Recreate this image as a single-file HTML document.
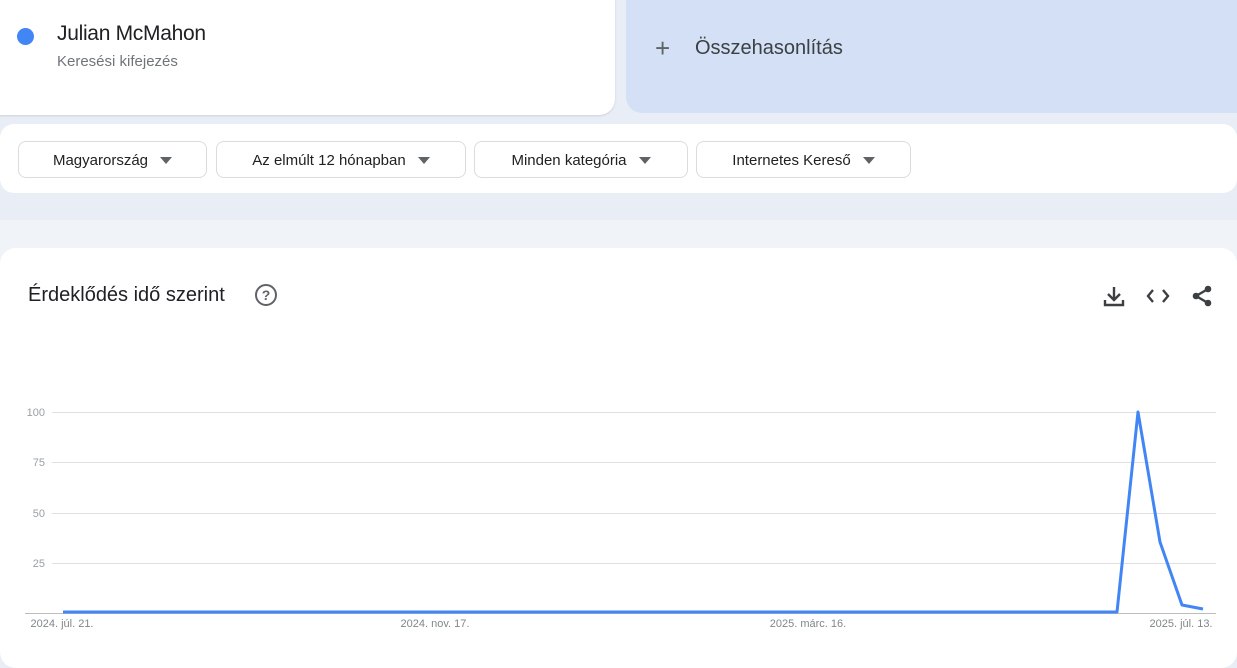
<!DOCTYPE html>
<html><head><meta charset="utf-8"><style>
body{margin:0;width:1237px;height:651px;overflow:hidden;background:#e9eef6;font-family:"Liberation Sans",sans-serif;position:relative}
.a{position:absolute}
.card1{left:-20px;top:-20px;width:635px;height:135px;background:#fff;border-radius:16px;box-shadow:0 1px 2px rgba(0,0,0,.12)}
.card2{left:626px;top:-20px;width:640px;height:133px;background:#d3e0f5;border-radius:16px}
.filt{left:0;top:124px;width:1237px;height:69px;background:#fff;border-radius:14px}
.btn{top:141px;height:37px;padding-top:2px;border:1px solid #dadce0;border-radius:8px;background:#fff;font-size:15px;color:#202124;display:flex;align-items:center;justify-content:center;gap:12px;box-sizing:border-box}
.tri{width:0;height:0;border-left:6px solid transparent;border-right:6px solid transparent;border-top:7px solid #5f6368}
.band{left:0;top:220px;width:1237px;height:431px;background:#f0f4f9}
.chart{left:0;top:248px;width:1237px;height:420px;background:#fff;border-radius:16px}
</style></head><body>
<div class="a card1"></div>
<div class="a" style="left:17px;top:28px;width:17px;height:17px;border-radius:50%;background:#4285f4"></div>
<div class="a" style="left:57px;top:22px;font-size:21px;color:#202124;letter-spacing:-0.3px">Julian McMahon</div>
<div class="a" style="left:57px;top:53px;font-size:15px;color:#70757a">Keresési kifejezés</div>
<div class="a card2"></div>
<div class="a" style="left:655px;top:34px;font-size:26px;color:#5f6368;line-height:28px">+</div>
<div class="a" style="left:695px;top:37px;font-size:20px;color:#3c4043">Összehasonlítás</div>
<div class="a filt"></div>
<div class="a btn" style="left:18px;width:189px">Magyarország<span class="tri"></span></div>
<div class="a btn" style="left:216px;width:250px">Az elmúlt 12 hónapban<span class="tri"></span></div>
<div class="a btn" style="left:474px;width:214px">Minden kategória<span class="tri"></span></div>
<div class="a btn" style="left:696px;width:215px">Internetes Kereső<span class="tri"></span></div>
<div class="a band"></div>
<div class="a chart"></div>
<div class="a" style="left:28px;top:284px;font-size:20px;color:#202124">Érdeklődés idő szerint</div>
<svg class="a" style="left:254px;top:283px" width="24" height="24" viewBox="0 0 24 24"><circle cx="12" cy="12" r="10" fill="none" stroke="#5f6368" stroke-width="2"/><text x="12" y="17" font-size="14" font-weight="bold" text-anchor="middle" fill="#5f6368" font-family="Liberation Sans">?</text></svg>
<svg class="a" style="left:1100px;top:283px" width="120" height="26" viewBox="0 0 120 26">
<g fill="none" stroke="#3c4043" stroke-width="2.4">
<path d="M14 4v12M8 11l6 6 6-6M5 17v5h18v-5"/>
<path d="M53 7l-5 6 5 6M63 7l5 6-5 6"/>
<path d="M108 6l-12 7 12 7"/></g>
<g fill="#3c4043"><circle cx="108" cy="6" r="3.3"/><circle cx="96" cy="13" r="3.3"/><circle cx="108" cy="20" r="3.3"/></g>
</svg>
<svg class="a" style="left:0;top:0" width="1237" height="651">
<g stroke="#e0e0e0" stroke-width="1"><line x1="52" y1="412.5" x2="1216" y2="412.5"/><line x1="52" y1="462.5" x2="1216" y2="462.5"/><line x1="52" y1="513.5" x2="1216" y2="513.5"/><line x1="52" y1="563.5" x2="1216" y2="563.5"/></g>
<line x1="25" y1="613.5" x2="1216" y2="613.5" stroke="#bdbdbd"/>
<g font-family="Liberation Sans" font-size="11" fill="#9aa0a6" text-anchor="end"><text x="45" y="416">100</text><text x="45" y="466">75</text><text x="45" y="517">50</text><text x="45" y="567">25</text></g>
<g font-family="Liberation Sans" font-size="11" fill="#80868b" text-anchor="middle"><text x="62" y="627">2024. júl. 21.</text><text x="435" y="627">2024. nov. 17.</text><text x="808" y="627">2025. márc. 16.</text><text x="1181" y="627">2025. júl. 13.</text></g>
<polyline points="63,612 1117,612 1138,412 1160,542 1182,605 1203,609" fill="none" stroke="#4285f4" stroke-width="3" stroke-linejoin="round"/>
</svg>
</body></html>
